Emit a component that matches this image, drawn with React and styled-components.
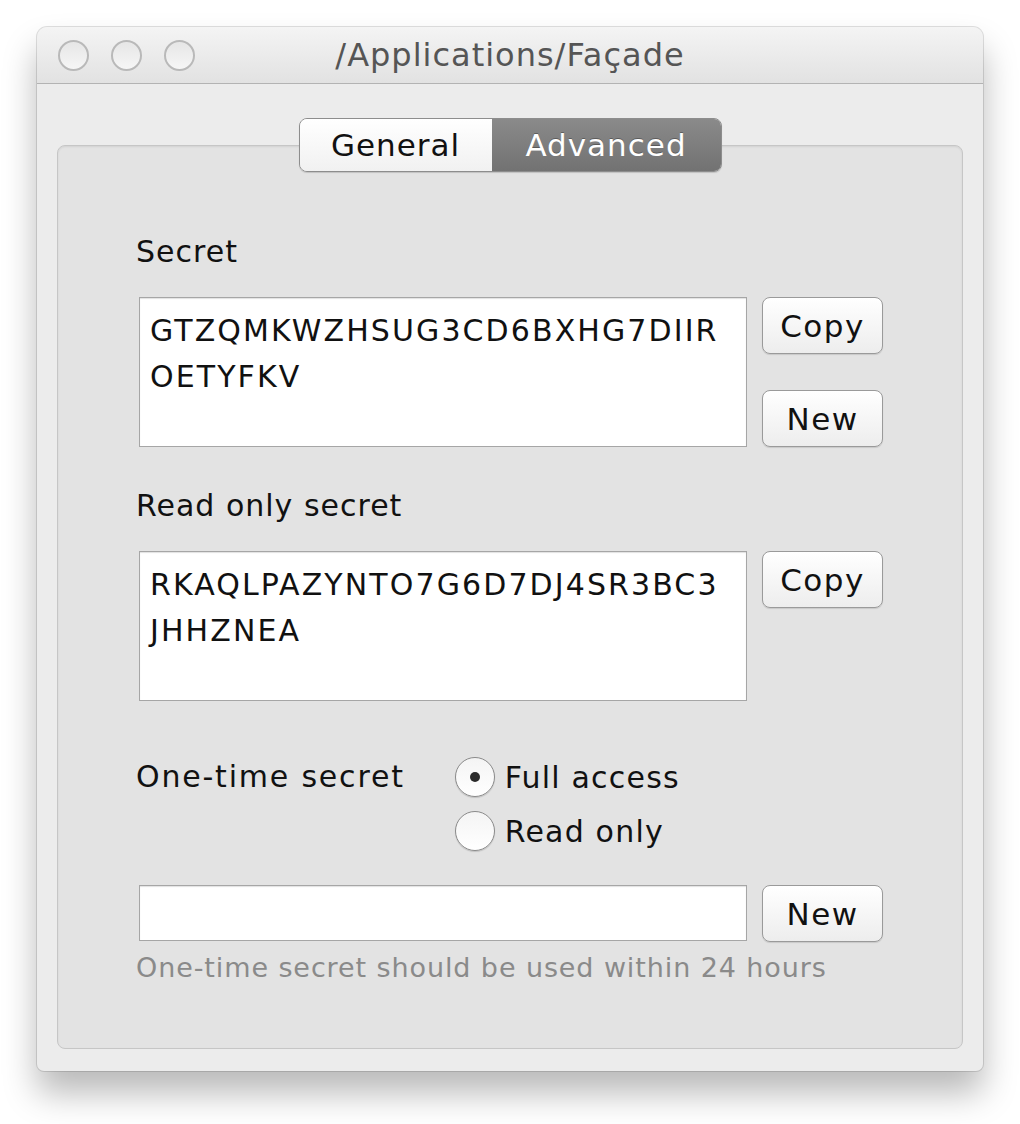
import React from "react";
import styled, { createGlobalStyle } from "styled-components";

const GlobalStyle = createGlobalStyle`
  body {
    margin: 0;
    background: #ffffff;
    font-family: "DejaVu Sans", "Liberation Sans", sans-serif;
  }
`;

const Page = styled.div`
  padding: 27px 0 60px 37px;
`;

const Window = styled.div`
  width: 946px;
  background: #ececec;
  border-radius: 10px 10px 7px 7px;
  box-shadow: 0 22px 34px rgba(0, 0, 0, 0.28), 0 0 0 1px rgba(0, 0, 0, 0.12);
  overflow: hidden;
`;

const TitleBar = styled.div`
  position: relative;
  height: 56px;
  display: flex;
  align-items: center;
  justify-content: center;
  background: linear-gradient(#f4f4f4, #e2e2e2);
  border-bottom: 1px solid #b3b3b3;
`;

const Lights = styled.div`
  position: absolute;
  left: 21px;
  top: 13px;
  display: flex;
  gap: 22px;
`;

const Light = styled.span`
  width: 27px;
  height: 27px;
  border-radius: 50%;
  border: 2px solid #b9b9b9;
  background: linear-gradient(#e6e6e6, #f6f6f6);
`;

const Title = styled.div`
  font-size: 32px;
  letter-spacing: 1px;
  color: #555555;
`;

const Body = styled.div`
  padding: 34px 20px 22px;
  display: flex;
  flex-direction: column;
  align-items: center;
`;

const Tabs = styled.div`
  position: relative;
  z-index: 1;
  display: flex;
  height: 52px;
  border: 1px solid #8d8d8d;
  border-radius: 8px;
  overflow: hidden;
  box-shadow: 0 1px 1px rgba(0, 0, 0, 0.15);
`;

const Tab = styled.div`
  display: flex;
  align-items: center;
  justify-content: center;
  width: ${(p) => p.w}px;
  font-size: 31px;
  letter-spacing: 1px;
  color: ${(p) => (p.active ? "#ffffff" : "#111111")};
  background: ${(p) =>
    p.active
      ? "linear-gradient(#8a8a8a, #727272)"
      : "linear-gradient(#ffffff, #f1f1f1)"};
  text-shadow: ${(p) => (p.active ? "0 -1px 0 rgba(0,0,0,0.3)" : "none")};
`;

const Group = styled.div`
  align-self: stretch;
  margin-top: -27px;
  background: #e3e3e3;
  border: 1px solid #c6c6c6;
  border-radius: 8px;
  box-shadow: inset 0 1px 2px rgba(0, 0, 0, 0.08);
  padding: 88px 79px 64px 81px;
  display: grid;
  grid-template-columns: 608px 121px;
  column-gap: 15px;
`;

const Label = styled.div`
  grid-column: 1 / 3;
  font-size: 30px;
  letter-spacing: 1px;
  line-height: 36px;
  color: #111111;
  margin-left: -3px;
  margin-top: ${(p) => p.top || 0}px;
  margin-bottom: 27px;
`;

const Field = styled.div`
  box-sizing: border-box;
  height: ${(p) => p.h}px;
  background: #ffffff;
  border: 1px solid #a6a6a6;
  box-shadow: inset 0 1px 1px rgba(0, 0, 0, 0.12);
  padding: 10px 10px;
  font-size: 30px;
  letter-spacing: 2.1px;
  line-height: 46px;
  color: #111111;
  white-space: nowrap;
`;

const Buttons = styled.div`
  display: flex;
  flex-direction: column;
  gap: 36px;
`;

const Button = styled.div`
  box-sizing: border-box;
  height: 57px;
  display: flex;
  align-items: center;
  justify-content: center;
  border: 1px solid #9a9a9a;
  border-radius: 8px;
  background: linear-gradient(#ffffff, #ededed);
  box-shadow: 0 1px 1px rgba(0, 0, 0, 0.12);
  font-size: 31px;
  letter-spacing: 1.5px;
  color: #111111;
`;

const OneTime = styled.div`
  grid-column: 1 / 3;
  display: flex;
  gap: 50px;
  margin: 49px 0 27px -3px;
`;

const OneTimeLabel = styled.div`
  font-size: 30px;
  letter-spacing: 1.8px;
  line-height: 54px;
  color: #111111;
`;

const Radios = styled.div`
  display: flex;
  flex-direction: column;
`;

const RadioRow = styled.div`
  display: flex;
  align-items: center;
  gap: 10px;
  height: 54px;
  font-size: 30px;
  letter-spacing: 1.2px;
  color: #111111;
`;

const Radio = styled.span`
  box-sizing: border-box;
  width: 40px;
  height: 40px;
  border-radius: 50%;
  border: 1px solid #8a8a8a;
  background: linear-gradient(#f4f4f4, #ffffff);
  box-shadow: 0 1px 1px rgba(0, 0, 0, 0.15);
  display: flex;
  align-items: center;
  justify-content: center;
  &::after {
    content: "";
    width: 10px;
    height: 10px;
    border-radius: 50%;
    background: ${(p) => (p.checked ? "#2a2a2a" : "transparent")};
  }
`;

const Hint = styled.div`
  grid-column: 1 / 3;
  margin: 10px 0 0 -3px;
  font-size: 27px;
  letter-spacing: 0.9px;
  line-height: 32px;
  color: #8a8a8a;
`;

export default function App() {
  return (
    <Page>
      <GlobalStyle />
      <Window>
        <TitleBar>
          <Lights>
            <Light />
            <Light />
            <Light />
          </Lights>
          <Title>/Applications/Façade</Title>
        </TitleBar>
        <Body>
          <Tabs>
            <Tab w={192}>General</Tab>
            <Tab w={229} active>
              Advanced
            </Tab>
          </Tabs>
          <Group>
            <Label>Secret</Label>
            <Field h={150}>
              GTZQMKWZHSUG3CD6BXHG7DIIR
              <br />
              OETYFKV
            </Field>
            <Buttons>
              <Button>Copy</Button>
              <Button>New</Button>
            </Buttons>
            <Label top={41}>Read only secret</Label>
            <Field h={150}>
              RKAQLPAZYNTO7G6D7DJ4SR3BC3
              <br />
              JHHZNEA
            </Field>
            <Buttons>
              <Button>Copy</Button>
            </Buttons>
            <OneTime>
              <OneTimeLabel>One-time secret</OneTimeLabel>
              <Radios>
                <RadioRow>
                  <Radio checked />
                  Full access
                </RadioRow>
                <RadioRow>
                  <Radio />
                  Read only
                </RadioRow>
              </Radios>
            </OneTime>
            <Field h={56} />
            <Button>New</Button>
            <Hint>One-time secret should be used within 24 hours</Hint>
          </Group>
        </Body>
      </Window>
    </Page>
  );
}
